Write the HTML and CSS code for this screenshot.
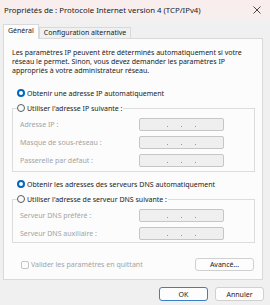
FILE: index.html
```html
<!DOCTYPE html>
<html lang="fr">

<head>
  <meta charset="UTF-8">
  <title>Propriétés de : Protocole Internet version 4 (TCP/IPv4)</title>
  <link rel="stylesheet" href="styles.css">
</head>

<body>

  <div class="window">
    <div class="titlebar">
      <span class="title">Propriétés de : Protocole Internet version 4 (TCP/IPv4)</span>
      <svg class="close" width="8" height="8" viewBox="0 0 8 8">
        <path d="M0.5 0.5 L7.5 7.5 M7.5 0.5 L0.5 7.5" stroke="#333" stroke-width="0.9" />
      </svg>
    </div>

    <div class="tabs">
      <div class="tab active">Général</div>
      <div class="tab">Configuration alternative</div>
    </div>

    <div class="panel">
      <p class="desc">Les paramètres IP peuvent être déterminés automatiquement si votre
        réseau le permet. Sinon, vous devez demander les paramètres IP
        appropriés à votre administrateur réseau.</p>

      <div class="option first">
        <span class="radio checked"></span>Obtenir une adresse IP automatiquement
      </div>

      <fieldset class="group">
        <legend class="option"><span class="radio"></span>Utiliser l'adresse IP suivante :</legend>
        <div class="row">
          <label>Adresse IP :</label>
          <div class="ip"><i></i><i></i><i></i></div>
        </div>
        <div class="row">
          <label>Masque de sous-réseau :</label>
          <div class="ip"><i></i><i></i><i></i></div>
        </div>
        <div class="row">
          <label>Passerelle par défaut :</label>
          <div class="ip"><i></i><i></i><i></i></div>
        </div>
      </fieldset>

      <div class="option dns">
        <span class="radio checked"></span>Obtenir les adresses des serveurs DNS automatiquement
      </div>

      <fieldset class="group small">
        <legend class="option"><span class="radio"></span>Utiliser l'adresse de serveur DNS suivante :</legend>
        <div class="row">
          <label>Serveur DNS préféré :</label>
          <div class="ip"><i></i><i></i><i></i></div>
        </div>
        <div class="row">
          <label>Serveur DNS auxiliaire :</label>
          <div class="ip"><i></i><i></i><i></i></div>
        </div>
      </fieldset>

      <div class="bottom-row">
        <div class="check"><span class="box"></span>Valider les paramètres en quittant</div>
        <button class="btn advanced">Avancé...</button>
      </div>
    </div>

    <div class="footer">
      <button class="btn ok">OK</button>
      <button class="btn">Annuler</button>
    </div>
  </div>

</body>

</html>
```

FILE: styles.css
```css
* {
  box-sizing: border-box;
  margin: 0;
  padding: 0;
  font-family: "Noto Sans", Arial, sans-serif;
}

body {
  background-color: #f0f0f0;
  color: #1b1b1b;
  width: 270px;
  height: 305px;
  overflow: hidden;
  font-size: 7px;
}

.window {
  width: 270px;
  height: 305px;
}

.titlebar {
  height: 22px;
  display: flex;
  align-items: center;
  justify-content: space-between;
  padding: 0 9px 2px 4px;
  background: linear-gradient(#f9eded, #f7eeee 70%, #f0f0f0);
  font-size: 7.8px;
}

.close {
  display: block;
}

.tabs {
  display: flex;
  align-items: flex-end;
  height: 16px;
  padding-left: 3px;
}

.tab {
  height: 11px;
  line-height: 10px;
  padding: 0 4px;
  border: 1px solid #d9d9d9;
  border-bottom: none;
  background: #f0f0f0;
}

.tab.active {
  height: 15px;
  line-height: 12px;
  background: #fcfcfc;
  margin-bottom: -1px;
  position: relative;
  z-index: 1;
}

.panel {
  width: 260px;
  height: 242px;
  margin-left: 3px;
  border: 1px solid #d9d9d9;
  background: #fcfcfc;
  padding: 9px 7px 0 8px;
}

.desc {
  line-height: 9px;
}

.option {
  display: flex;
  align-items: center;
  height: 10px;
  white-space: nowrap;
}

.option.first {
  margin-top: 13px;
  padding-left: 5px;
}

.option.dns {
  margin-top: 7px;
  padding-left: 5px;
}

.radio {
  width: 8px;
  height: 8px;
  border-radius: 50%;
  border: 1px solid #5c5c5c;
  background: #fafafa;
  margin-right: 2px;
  flex-shrink: 0;
}

.radio.checked {
  border: 2.5px solid #0067c0;
  background: #fff;
}

.group {
  border: 1px solid #dcdcdc;
  margin-top: 5px;
  padding: 5px 0 4px 4px;
}

.group.small {
  padding-bottom: 2px;
}

.group legend {
  padding-right: 1px;
}

.row {
  display: flex;
  align-items: center;
  height: 13px;
  margin-bottom: 5px;
  padding-left: 3px;
}

.row:last-child {
  margin-bottom: 0;
}

.row label {
  width: 119px;
  flex-shrink: 0;
  color: #a3a3a3;
}

.ip {
  width: 85px;
  height: 13px;
  border: 1px solid #c6c6c6;
  border-radius: 2px;
  background: #efefef;
  display: flex;
  justify-content: space-evenly;
  align-items: flex-end;
  padding: 0 14px 3px;
}

.ip i {
  width: 1px;
  height: 1px;
  background: #9a9a9a;
}

.bottom-row {
  display: flex;
  justify-content: space-between;
  align-items: center;
  margin-top: 15px;
}

.check {
  display: flex;
  align-items: center;
  color: #a3a3a3;
  padding-left: 9px;
}

.box {
  width: 8px;
  height: 8px;
  border: 1px solid #c4c4c4;
  border-radius: 2px;
  margin-right: 2px;
}

.btn {
  height: 14px;
  border: 1px solid #d0d0d0;
  border-radius: 3px;
  background: #fdfdfd;
  font-size: 7px;
  color: #1b1b1b;
  font-family: "Noto Sans", Arial, sans-serif;
}

.advanced {
  width: 59px;
  height: 13px;
  margin-right: 1px;
}

.footer {
  display: flex;
  justify-content: flex-end;
  gap: 7px;
  padding: 7px 6px 0 0;
}

.footer .btn {
  width: 49px;
}

.btn.ok {
  border-color: #3a7fc8;
}
```
